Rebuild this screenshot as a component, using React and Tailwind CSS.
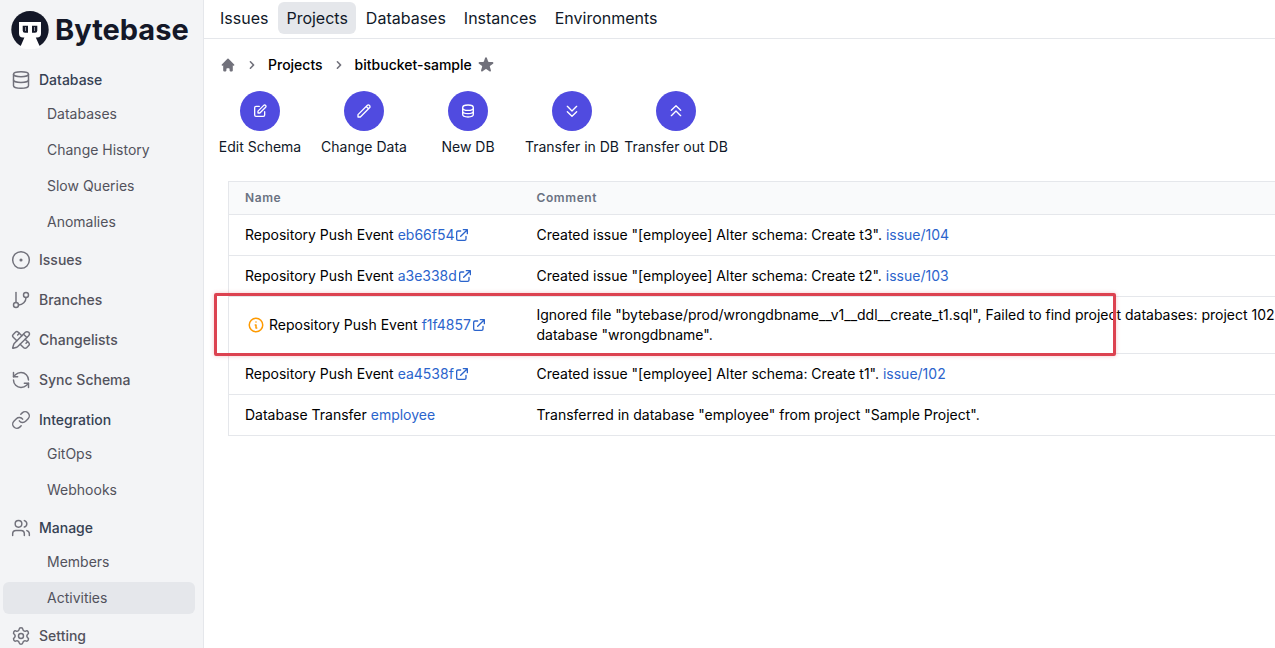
import React, { useState } from "react";
import {
  CircleDot,
  Database,
  GitBranch,
  Link,
  PencilRuler,
  RefreshCcw,
  Settings,
  Users,
} from "lucide-react";
import {
  HiChevronRight,
  HiHome,
  HiOutlineChevronDoubleDown,
  HiOutlineChevronDoubleUp,
  HiOutlineDatabase,
  HiOutlineExternalLink,
  HiOutlineInformationCircle,
  HiOutlinePencil,
  HiOutlinePencilAlt,
  HiStar,
} from "react-icons/hi";

const sections = [
  {
    name: "Database",
    icon: Database,
    children: ["Databases", "Change History", "Slow Queries", "Anomalies"],
  },
  { name: "Issues", icon: CircleDot },
  { name: "Branches", icon: GitBranch },
  { name: "Changelists", icon: PencilRuler },
  { name: "Sync Schema", icon: RefreshCcw },
  { name: "Integration", icon: Link, children: ["GitOps", "Webhooks"] },
  { name: "Manage", icon: Users, children: ["Members", "Activities"] },
  { name: "Setting", icon: Settings },
];

const tabs = ["Issues", "Projects", "Databases", "Instances", "Environments"];

const actions = [
  { name: "Edit Schema", icon: HiOutlinePencilAlt },
  { name: "Change Data", icon: HiOutlinePencil },
  { name: "New DB", icon: HiOutlineDatabase },
  { name: "Transfer in DB", icon: HiOutlineChevronDoubleDown },
  { name: "Transfer out DB", icon: HiOutlineChevronDoubleUp },
];

const activities = [
  {
    event: "Repository Push Event",
    link: "eb66f54",
    external: true,
    comment: 'Created issue "[employee] Alter schema: Create t3".',
    issue: "issue/104",
  },
  {
    event: "Repository Push Event",
    link: "a3e338d",
    external: true,
    comment: 'Created issue "[employee] Alter schema: Create t2".',
    issue: "issue/103",
  },
  {
    event: "Repository Push Event",
    link: "f1f4857",
    external: true,
    warning: true,
    comment:
      'Ignored file "bytebase/prod/wrongdbname__v1__ddl__create_t1.sql", Failed to find project databases: project 102\ndatabase "wrongdbname".',
  },
  {
    event: "Repository Push Event",
    link: "ea4538f",
    external: true,
    comment: 'Created issue "[employee] Alter schema: Create t1".',
    issue: "issue/102",
  },
  {
    event: "Database Transfer",
    link: "employee",
    comment: 'Transferred in database "employee" from project "Sample Project".',
  },
];

const Logo = () => (
  <a href="#" className="flex items-center gap-1.5 pl-2 text-[#141828]">
    <svg viewBox="0 0 38 38" className="size-[38px] shrink-0">
      <circle cx="19" cy="18.7" r="18.7" fill="currentColor" />
      {/* face and neck */}
      <path
        fill="#fff"
        d="M8 11H30V22.5Q30 26.5 26 26.5H24.8L29 36Q28 38 19 38Q10 38 9.3 36L13.4 26.5H12Q8 26.5 8 22.5Z"
      />
      {/* eyes */}
      <path
        fill="currentColor"
        d="M11.7 14.8H17V21.8H14Q11.7 21.8 11.7 19.5ZM21 14.8H26.3V19.5Q26.3 21.8 24 21.8H21Z"
      />
      <path fill="#8b8e98" d="M14 16h1v4h-1zM23 16h1v4h-1z" />
    </svg>
    <span className="text-[29px] leading-9 font-bold">Bytebase</span>
  </a>
);

const Sidebar = ({ active, onSelect }) => (
  <aside className="w-[204px] shrink-0 overflow-hidden border-r border-gray-200 bg-gray-100 pt-[11px] pr-2 pl-[3px]">
    <Logo />
    <nav className="mt-[15px] flex flex-col gap-2 text-sm">
      {sections.map(({ name, icon: Icon, children }) => (
        <div key={name}>
          <a
            href="#"
            className={`flex h-8 items-center gap-2 px-2 font-medium ${
              children ? "text-gray-700" : "text-zinc-600"
            }`}
          >
            <Icon size={20} strokeWidth={1.75} className="text-zinc-500" />
            {name}
          </a>
          {children && (
            <div className="mt-0.5 -mb-0.5 flex flex-col gap-1">
              {children.map((child) => (
                <a
                  key={child}
                  href="#"
                  onClick={() => onSelect(child)}
                  className={`flex h-8 items-center rounded-md pl-11 text-zinc-600 ${
                    child === active ? "bg-gray-200" : ""
                  }`}
                >
                  {child}
                </a>
              ))}
            </div>
          )}
        </div>
      ))}
    </nav>
  </aside>
);

const ActivityRow = ({ item }) => {
  const padding = item.warning ? "py-2 pl-4" : "py-2.5 pl-4";

  return (
    <tr className="relative border-y border-gray-200">
      <td className={padding}>
        <div className="flex items-center">
          {item.warning && (
            <HiOutlineInformationCircle
              size={18}
              className="mr-1 ml-0.5 text-amber-500"
            />
          )}
          <span>
            {item.event}{" "}
            <a href="#" className="text-[#2b64cc]">
              {item.link}
            </a>
          </span>
          {item.external && (
            <HiOutlineExternalLink size={16} className="text-[#2b64cc]" />
          )}
        </div>
        {/* red frame around the failed push */}
        {item.warning && (
          <div className="pointer-events-none absolute -top-[5px] -bottom-[3px] -left-[15px] w-[902px] rounded-xs border-3 border-[#dc4250] shadow-[0_0_4px_rgba(220,66,80,0.3)]" />
        )}
      </td>
      <td className={padding}>
        <span className={item.warning ? "whitespace-pre" : ""}>
          {item.comment}
        </span>
        {item.issue && (
          <>
            {" "}
            <a href="#" className="text-[#2b64cc]">
              {item.issue}
            </a>
          </>
        )}
      </td>
    </tr>
  );
};

const App = () => {
  const [tab, setTab] = useState("Projects");
  const [active, setActive] = useState("Activities");

  return (
    <div className="flex h-screen overflow-hidden bg-white font-['Inter',sans-serif] text-black">
      <Sidebar active={active} onSelect={setActive} />
      <main className="min-w-0 flex-1 overflow-hidden">
        <nav className="flex gap-0.5 border-b border-gray-200 px-2 pt-0.5 pb-1 text-base text-gray-900">
          {tabs.map((name) => (
            <a
              key={name}
              href="#"
              onClick={() => setTab(name)}
              className={`flex h-8 items-center rounded-md px-2 ${
                name === tab ? "bg-gray-200" : ""
              }`}
            >
              {name}
            </a>
          ))}
        </nav>

        <div className="mt-4 flex h-5 items-center pl-4 text-sm font-medium">
          <a href="#" aria-label="Home">
            <HiHome size={16} className="text-zinc-500" />
          </a>
          <HiChevronRight size={16} className="mx-2 text-zinc-500" />
          <a href="#">Projects</a>
          <HiChevronRight size={16} className="mx-2 text-zinc-500" />
          <a href="#">bitbucket-sample</a>
          <button type="button" aria-label="Star" className="ml-1">
            <HiStar size={20} className="text-zinc-500" />
          </button>
        </div>

        <div className="mt-4 flex gap-2 pl-2 text-sm">
          {actions.map(({ name, icon: Icon }) => (
            <button
              key={name}
              type="button"
              className="flex w-24 flex-col items-center gap-1.5 whitespace-nowrap text-gray-900"
            >
              <span className="flex size-10 items-center justify-center rounded-full bg-[#504be0] text-white">
                <Icon size={16} />
              </span>
              {name}
            </button>
          ))}
        </div>

        <div className="mt-6 pl-6">
          <table className="w-full table-fixed border-collapse border-y border-l border-gray-200 text-left text-sm">
            <thead className="bg-gray-50 text-xs tracking-wider text-gray-500">
              <tr>
                <th className="w-[292px] py-2 pl-4 font-semibold">Name</th>
                <th className="py-2 pl-4 font-semibold">Comment</th>
              </tr>
            </thead>
            <tbody>
              {activities.map((item) => (
                <ActivityRow key={item.link} item={item} />
              ))}
            </tbody>
          </table>
        </div>
      </main>
    </div>
  );
};

export default App;
